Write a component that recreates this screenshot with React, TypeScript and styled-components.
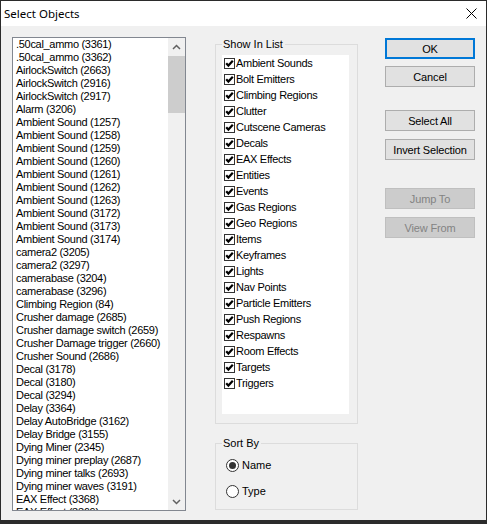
import React from 'react';
import styled, { createGlobalStyle } from 'styled-components';

const Global = createGlobalStyle`
  html, body { margin: 0; padding: 0; background: #2b2b2b; }
  body { width: 487px; height: 524px; overflow: hidden; }
`;

const Window = styled.div`
  width: 487px;
  height: 524px;
  box-sizing: border-box;
  border: 1px solid #2b2b2b;
  border-bottom-width: 4px;
  display: flex;
  flex-direction: column;
  background: #f0f0f0;
  font-family: "Liberation Sans", Arial, sans-serif;
  font-size: 11px;
  color: #000;
`;

const TitleBar = styled.div`
  height: 25px;
  flex: none;
  background: #fff;
  display: flex;
  align-items: center;
  justify-content: space-between;
  padding: 0 9px 0 3px;
  font-family: "Noto Sans", "Liberation Sans", sans-serif;
  font-size: 11.5px;
`;

const Body = styled.div`
  flex: 1;
  display: flex;
  align-items: flex-start;
  padding: 11px 0 0 11px;
`;

const ListBox = styled.div`
  width: 174px;
  height: 474px;
  box-sizing: border-box;
  border: 1px solid #828790;
  background: #fff;
  display: flex;
`;

const Items = styled.div`
  flex: 1;
  overflow: hidden;
  padding-left: 3px;
  letter-spacing: -0.3px;
`;

const Item = styled.div`
  height: 13px;
  line-height: 13px;
  white-space: nowrap;
`;

const ScrollBar = styled.div`
  width: 17px;
  flex: none;
  background: #f0f0f0;
  display: flex;
  flex-direction: column;
`;

const ScrollButton = styled.div`
  height: 17px;
  flex: none;
  display: flex;
  align-items: center;
  justify-content: center;
`;

const Track = styled.div`
  flex: 1;
  padding-top: 1px;
`;

const Thumb = styled.div`
  height: 57px;
  background: #cdcdcd;
`;

const MiddleColumn = styled.div`
  width: 143px;
  margin-left: 29px;
  margin-top: 7px;
  display: flex;
  flex-direction: column;
`;

const GroupBox = styled.div<{ $height: number; $padTop: number; $mt?: number }>`
  position: relative;
  box-sizing: border-box;
  height: ${p => p.$height}px;
  margin-top: ${p => p.$mt ?? 0}px;
  border: 1px solid #dcdcdc;
  padding: ${p => p.$padTop}px 8px 0 6px;
`;

const GroupLabel = styled.span`
  position: absolute;
  top: -7px;
  left: 6px;
  padding: 0 2px 0 1px;
  background: #f0f0f0;
  line-height: 13px;
`;

const CheckList = styled.div`
  width: 127px;
  height: 359px;
  background: #fff;
  letter-spacing: -0.3px;
`;

const CheckRow = styled.label`
  height: 16px;
  display: flex;
  align-items: center;
  padding-left: 2px;
  gap: 1px;
  white-space: nowrap;
`;

const CheckBox = styled.span`
  width: 11px;
  height: 11px;
  box-sizing: border-box;
  border: 1px solid #333;
  background: #fff;
  display: flex;
  align-items: center;
  justify-content: center;
  flex: none;
`;

const RadioRow = styled.label<{ $mt?: number }>`
  height: 16px;
  display: flex;
  align-items: center;
  gap: 3px;
  padding-left: 4px;
  margin-top: ${p => p.$mt ?? 0}px;
`;

const Radio = styled.span<{ $checked?: boolean }>`
  width: 13px;
  height: 13px;
  box-sizing: border-box;
  border: 1px solid #333;
  border-radius: 50%;
  background: #fff;
  display: flex;
  align-items: center;
  justify-content: center;
  flex: none;
  &::after {
    content: "";
    width: 7px;
    height: 7px;
    border-radius: 50%;
    background: #333;
    display: ${p => (p.$checked ? 'block' : 'none')};
  }
`;

const ButtonColumn = styled.div`
  width: 90px;
  margin-left: 27px;
  margin-top: 1px;
  display: flex;
  flex-direction: column;
`;

const Button = styled.div<{ $mt?: number; $default?: boolean; $disabled?: boolean }>`
  height: 21px;
  box-sizing: border-box;
  margin-top: ${p => p.$mt ?? 0}px;
  border: ${p => (p.$default ? '2px solid #0078d7' : p.$disabled ? '1px solid #bfbfbf' : '1px solid #adadad')};
  background: ${p => (p.$disabled ? '#cccccc' : '#e1e1e1')};
  color: ${p => (p.$disabled ? '#838383' : '#000')};
  display: flex;
  align-items: center;
  justify-content: center;
  white-space: nowrap;
  letter-spacing: -0.15px;
`;

const items = [
  '.50cal_ammo (3361)',
  '.50cal_ammo (3362)',
  'AirlockSwitch (2663)',
  'AirlockSwitch (2916)',
  'AirlockSwitch (2917)',
  'Alarm (3206)',
  'Ambient Sound (1257)',
  'Ambient Sound (1258)',
  'Ambient Sound (1259)',
  'Ambient Sound (1260)',
  'Ambient Sound (1261)',
  'Ambient Sound (1262)',
  'Ambient Sound (1263)',
  'Ambient Sound (3172)',
  'Ambient Sound (3173)',
  'Ambient Sound (3174)',
  'camera2 (3205)',
  'camera2 (3297)',
  'camerabase (3204)',
  'camerabase (3296)',
  'Climbing Region (84)',
  'Crusher damage (2685)',
  'Crusher damage switch (2659)',
  'Crusher Damage trigger (2660)',
  'Crusher Sound (2686)',
  'Decal (3178)',
  'Decal (3180)',
  'Decal (3294)',
  'Delay (3364)',
  'Delay AutoBridge (3162)',
  'Delay Bridge (3155)',
  'Dying Miner (2345)',
  'Dying miner preplay (2687)',
  'Dying miner talks (2693)',
  'Dying miner waves (3191)',
  'EAX Effect (3368)',
  'EAX Effect (3369)',
];

const categories = [
  'Ambient Sounds',
  'Bolt Emitters',
  'Climbing Regions',
  'Clutter',
  'Cutscene Cameras',
  'Decals',
  'EAX Effects',
  'Entities',
  'Events',
  'Gas Regions',
  'Geo Regions',
  'Items',
  'Keyframes',
  'Lights',
  'Nav Points',
  'Particle Emitters',
  'Push Regions',
  'Respawns',
  'Room Effects',
  'Targets',
  'Triggers',
];

const Check = () => (
  <svg width="9" height="9" viewBox="0 0 9 9">
    <polyline points="1.2,4.2 3.4,6.6 7.8,1.8" fill="none" stroke="#000" strokeWidth="2.2" />
  </svg>
);

const Chevron = ({ up }: { up?: boolean }) => (
  <svg width="9" height="6" viewBox="0 0 9 6">
    <polyline
      points={up ? '1,5 4.5,1.5 8,5' : '1,1 4.5,4.5 8,1'}
      fill="none"
      stroke="#606060"
      strokeWidth="1.5"
    />
  </svg>
);

const CloseIcon = () => (
  <svg width="11" height="11" viewBox="0 0 11 11">
    <path d="M0.5 0.5 L10.5 10.5 M10.5 0.5 L0.5 10.5" stroke="#000" strokeWidth="1" />
  </svg>
);

export default function App() {
  return (
    <>
      <Global />
      <Window>
        <TitleBar>
          <span>Select Objects</span>
          <CloseIcon />
        </TitleBar>
        <Body>
          <ListBox>
            <Items>
              {items.map((t, i) => (
                <Item key={i}>{t}</Item>
              ))}
            </Items>
            <ScrollBar>
              <ScrollButton>
                <Chevron up />
              </ScrollButton>
              <Track>
                <Thumb />
              </Track>
              <ScrollButton>
                <Chevron />
              </ScrollButton>
            </ScrollBar>
          </ListBox>
          <MiddleColumn>
            <GroupBox $height={380} $padTop={10}>
              <GroupLabel>Show In List</GroupLabel>
              <CheckList>
                {categories.map(c => (
                  <CheckRow key={c}>
                    <CheckBox>
                      <Check />
                    </CheckBox>
                    {c}
                  </CheckRow>
                ))}
              </CheckList>
            </GroupBox>
            <GroupBox $height={67} $padTop={13} $mt={19}>
              <GroupLabel>Sort By</GroupLabel>
              <RadioRow>
                <Radio $checked />
                Name
              </RadioRow>
              <RadioRow $mt={10}>
                <Radio />
                Type
              </RadioRow>
            </GroupBox>
          </MiddleColumn>
          <ButtonColumn>
            <Button $default>OK</Button>
            <Button $mt={7}>Cancel</Button>
            <Button $mt={23}>Select All</Button>
            <Button $mt={8}>Invert Selection</Button>
            <Button $mt={28} $disabled>Jump To</Button>
            <Button $mt={8} $disabled>View From</Button>
          </ButtonColumn>
        </Body>
      </Window>
    </>
  );
}
